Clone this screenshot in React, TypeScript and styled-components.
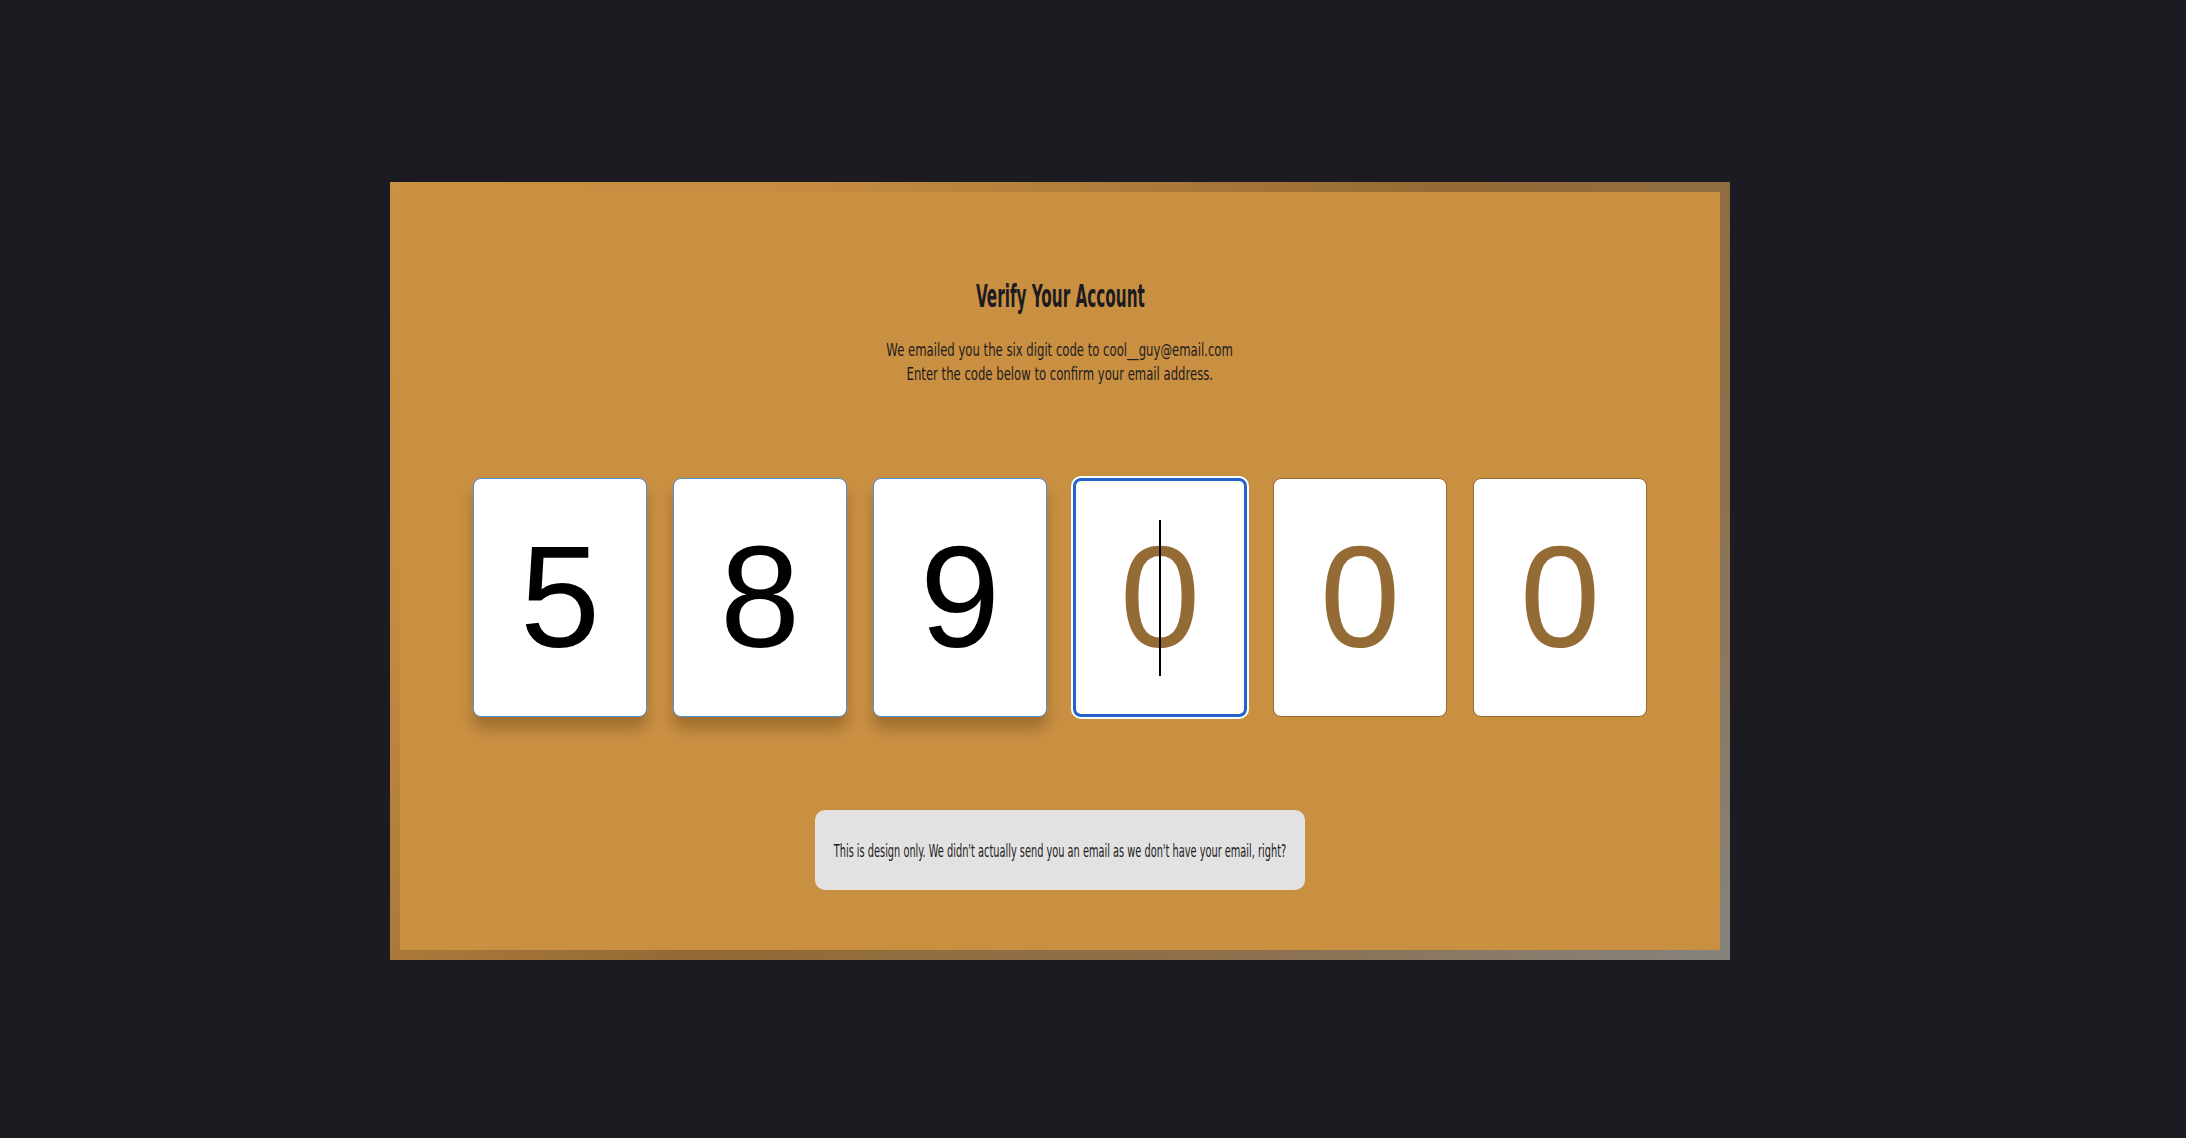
import React from "react";
import styled, { createGlobalStyle } from "styled-components";

const Global = createGlobalStyle`
  html, body { margin: 0; padding: 0; background: #1c1b21; }
  * { box-sizing: border-box; }
`;

const Page = styled.div`
  min-height: 100vh;
  display: flex;
  align-items: center;
  justify-content: center;
  padding: 4px 66px 0 0;
`;

const Frame = styled.div`
  width: 1340px;
  height: 778px;
  padding: 10px;
  background: linear-gradient(135deg, #cb9243 0%, #c68c40 20%, #946a35 50%, #8d6f4a 75%, #86837e 100%);
`;

const Panel = styled.div`
  width: 100%;
  height: 100%;
  background: #ca9042;
  display: flex;
  flex-direction: column;
  align-items: center;
  padding-top: 84px;
`;

const Condensed = styled.span<{ $scale: number }>`
  display: inline-block;
  font-family: "DejaVu Sans Condensed", "DejaVu Sans", sans-serif;
  font-stretch: condensed;
  white-space: nowrap;
  transform: scaleX(${(p) => p.$scale});
`;

const Title = styled.h1`
  margin: 0;
  height: 40px;
  line-height: 40px;
  font-size: 32px;
  font-weight: 700;
  color: #1c1b21;
  text-align: center;
`;

const Sub = styled.div`
  margin-top: 22px;
  display: flex;
  flex-direction: column;
  align-items: center;
  font-size: 18px;
  line-height: 24px;
  color: #1c1b21;
`;

const Row = styled.div`
  margin-top: 92px;
  display: flex;
  gap: 26px;
`;

const Box = styled.div<{ $state: "filled" | "focus" | "empty" }>`
  position: relative;
  width: 174px;
  height: 239px;
  background: #fff;
  border-radius: 8px;
  display: flex;
  align-items: center;
  justify-content: center;
  font-family: "Liberation Sans", Arial, sans-serif;
  font-size: 144px;
  color: ${(p) => (p.$state === "filled" ? "#000" : "#946a35")};
  border: ${(p) =>
    p.$state === "filled"
      ? "1.5px solid #4d93d9"
      : p.$state === "focus"
      ? "3px solid #2563c9"
      : "1.5px solid #946a35"};
  box-shadow: ${(p) =>
    p.$state === "filled"
      ? "0 12px 14px rgba(70, 40, 5, 0.32)"
      : p.$state === "focus"
      ? "0 0 0 2px #ffffff"
      : "none"};
`;

const Caret = styled.span`
  position: absolute;
  left: 50%;
  top: 50%;
  width: 2px;
  height: 156px;
  margin-left: -1px;
  transform: translateY(-50%);
  background: #000;
`;

const Note = styled.div`
  margin-top: 93px;
  width: 490px;
  height: 80px;
  border-radius: 10px;
  background: #e2e2e2;
  display: flex;
  align-items: center;
  justify-content: center;
  font-size: 18px;
  color: #1c1b21;
`;

const digits: { v: string; state: "filled" | "focus" | "empty" }[] = [
  { v: "5", state: "filled" },
  { v: "8", state: "filled" },
  { v: "9", state: "filled" },
  { v: "0", state: "focus" },
  { v: "0", state: "empty" },
  { v: "0", state: "empty" },
];

export default function App() {
  return (
    <>
      <Global />
      <Page>
        <Frame>
          <Panel>
            <Title>
              <Condensed $scale={0.53}>Verify Your Account</Condensed>
            </Title>
            <Sub>
              <Condensed $scale={0.72}>We emailed you the six digit code to cool__guy@email.com</Condensed>
              <Condensed $scale={0.72}>Enter the code below to confirm your email address.</Condensed>
            </Sub>
            <Row>
              {digits.map((d, i) => (
                <Box key={i} $state={d.state}>
                  {d.v}
                  {d.state === "focus" && <Caret />}
                </Box>
              ))}
            </Row>
            <Note>
              <Condensed $scale={0.605}>
                This is design only. We didn't actually send you an email as we don't have your email, right?
              </Condensed>
            </Note>
          </Panel>
        </Frame>
      </Page>
    </>
  );
}
